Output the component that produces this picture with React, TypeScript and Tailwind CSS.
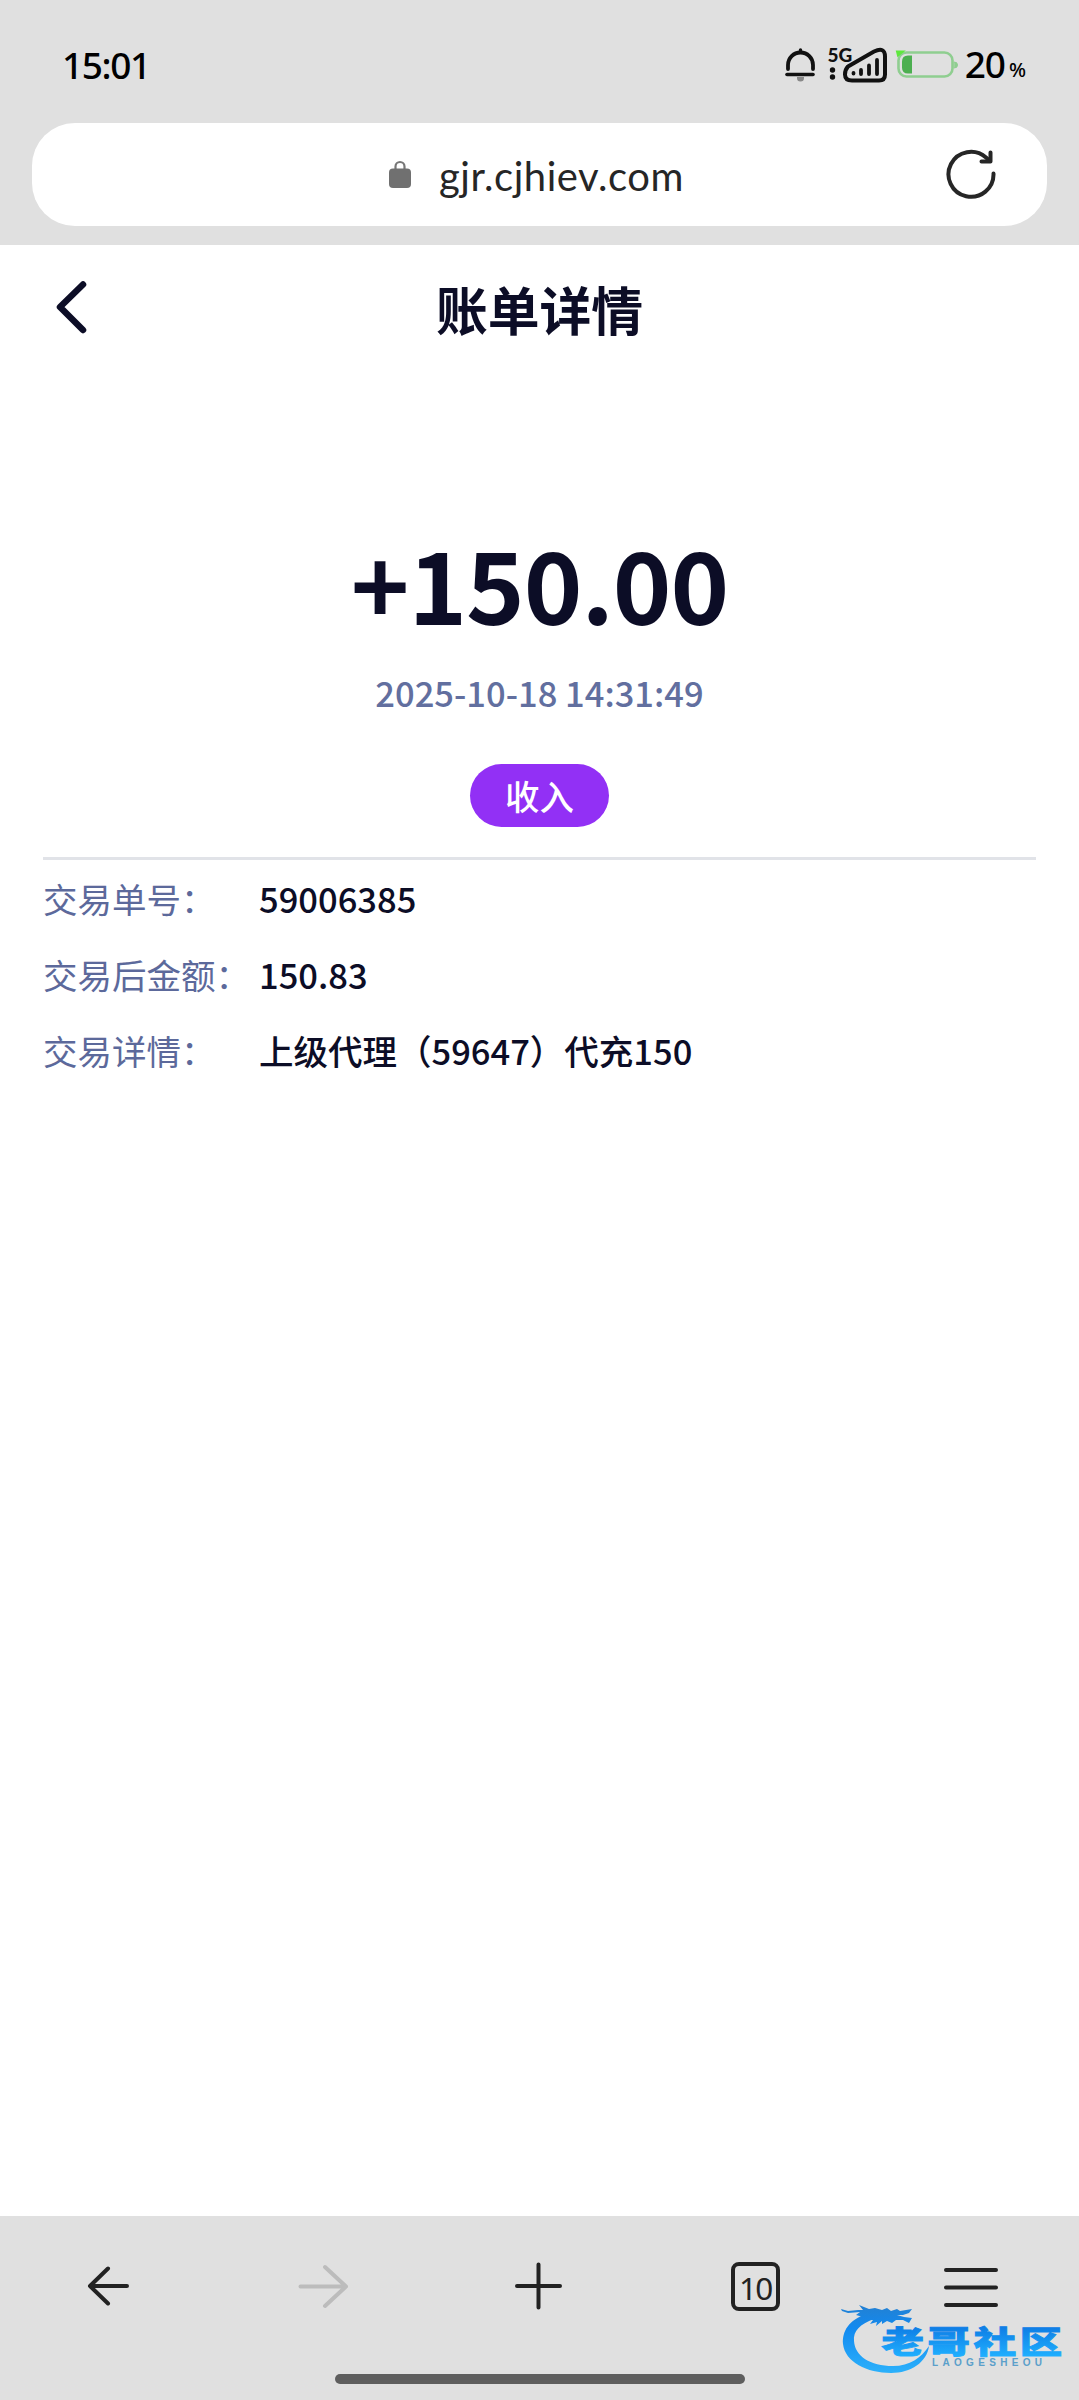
import React from 'react';

interface DetailRow {
  label: string;
  value: string;
}

const rows: DetailRow[] = [
  { label: '交易单号：', value: '59006385' },
  { label: '交易后金额：', value: '150.83' },
  { label: '交易详情：', value: '上级代理（59647）代充150' },
];

function StatusBar() {
  return (
    <div className="flex h-[123px] items-start justify-between pl-[62px] pr-[53px] pt-[41px] text-black">
      <span className="font-['Noto_Sans'] text-[37px] font-medium leading-[48px] tracking-[-1.4px]">15:01</span>
      <div className="flex h-12 items-center">
        <svg width="185" height="48" viewBox="0 0 185 48" fill="none" strokeLinecap="round">
          {/* Bell */}
          <path d="M9 28v-4a12.500 12.500 0 0 1 25 0v4" stroke="#111" strokeWidth="3.8" />
          <path d="M8 33.500h26" stroke="#111" strokeWidth="3.6" />
          <path d="M21.500 9v2" stroke="#111" strokeWidth="3.4" />
          <path d="M18 36h7v1a3.500 3.500 0 0 1-7 0z" fill="#888" />
          {/* Signal */}
          <text x="48.500" y="20.500" fontFamily="Lato" fontWeight="900" fontSize="19" fill="#111">5G</text>
          <circle cx="53.500" cy="29" r="2.700" fill="#111" />
          <circle cx="53.500" cy="36" r="2.700" fill="#111" />
          <path d="M69 25.500L95 10.500q11-5 11 5v18q0 6-6 6H73q-7 0-7-6 0-5 3-8z" stroke="#111" strokeWidth="4" />
          <path d="M74.500 32v.5M82 29v4M90 24.500v8.500M98 19v14" stroke="#111" strokeWidth="3.8" />
          {/* Battery */}
          <rect x="119.500" y="11.500" width="54" height="24" rx="8" stroke="#8fce90" strokeWidth="2.600" />
          <path d="M175.500 21a3 3 0 0 1 0 6z" fill="#8fce90" stroke="#8fce90" />
          <path d="M133 14.500v18h-4q-6 0-6-6v-6q0-6 6-6z" fill="#4caf50" />
          <path d="M118 10.500h6l-5 4z" fill="#5fe83e" stroke="#5fe83e" strokeWidth="2" />
        </svg>
        <span className="mb-[3px] ml-[1px] font-['Noto_Sans'] text-[37px] font-medium leading-none tracking-[-1px]">20</span>
        <span className="ml-[4px] mt-[9px] font-['Noto_Sans'] text-[20px] font-medium leading-none">%</span>
      </div>
    </div>
  );
}

function AddressBar() {
  return (
    <div className="mx-8 flex h-[103px] items-center rounded-[43px] bg-white text-[#262626]">
      <svg className="mb-0.5 ml-[357px]" width="22" height="28" viewBox="0 0 22 28">
        <path d="M6.500 10V6.500a4.500 4.500 0 0 1 9 0V10" fill="none" stroke="#777" strokeWidth="2.200" />
        <rect y="8.500" width="22" height="19.500" rx="4" fill="#707070" />
      </svg>
      <span className="ml-7 whitespace-nowrap pt-[3px] font-[Lato] text-[40px] leading-[48px] tracking-[0.55px]">gjr.cjhiev.com</span>
      <svg className="mb-px ml-auto mr-[50px]" width="52" height="52" viewBox="0 0 52 52" fill="none" stroke="#262626" strokeWidth="4" strokeLinecap="round" strokeLinejoin="round">
        <path d="M48.500 25.500A22.500 22.500 0 1 1 41 9.500L45 13" />
        <path d="M45.500 4.500v9h-9" />
      </svg>
    </div>
  );
}

function BillHeader() {
  return (
    <div className="grid h-[124px] grid-cols-[120px_1fr_120px] items-center text-[#0c0d26]">
      <svg className="ml-[55px]" width="32" height="54" viewBox="0 0 32 54" fill="none" stroke="currentColor" strokeWidth="6.5" strokeLinecap="round" strokeLinejoin="round">
        <path d="M28 4.500L5 27l23 23" />
      </svg>
      <h1 className="pt-1 text-center text-[51.8px] font-bold leading-[60px]">账单详情</h1>
    </div>
  );
}

function BrowserToolbar() {
  return (
    <div className="flex h-[184px] flex-col items-center bg-[#e0e0e0]">
      <div className="grid h-[140px] w-full grid-cols-5 place-items-center text-[#222]">
        <svg width="54" height="54" viewBox="0 0 54 54" fill="none" stroke="currentColor" strokeWidth="4" strokeLinecap="round" strokeLinejoin="round">
          <path d="M46 27H9M27 9.500L9 27l18 17.500" />
        </svg>
        <svg width="54" height="54" viewBox="0 0 54 54" fill="none" stroke="#bcbcbc" strokeWidth="4" strokeLinecap="round" strokeLinejoin="round">
          <path d="M3.500 27.500H49M28 8l21 19.500L28 47" />
        </svg>
        <svg width="54" height="54" viewBox="0 0 54 54" fill="none" stroke="currentColor" strokeWidth="4" strokeLinecap="round">
          <path d="M5 27h43M26.500 5.500v43" />
        </svg>
        <div className="flex h-[49px] w-[49px] items-center justify-center rounded-[8px] border-4 border-current pt-[3px] font-['Noto_Sans'] text-[31.5px] leading-none tracking-[-1.8px]">
          10
        </div>
        <svg width="54" height="54" viewBox="0 0 54 54" fill="none" stroke="currentColor" strokeWidth="4" strokeLinecap="round">
          <path d="M2 11h50M2 28.500h50M2 46h50" />
        </svg>
      </div>
      <div className="mt-[18px] h-[10px] w-[410px] rounded-full bg-[#5e5e5e]" />
    </div>
  );
}

/**
 * Community logo that floats over the bottom right corner
 */
function Watermark() {
  return (
    <svg className="absolute bottom-[15px] right-0" width="249" height="95" viewBox="0 0 249 95">
      <defs>
        <linearGradient id="wm" x1="0" y1="15" x2="0" y2="82" gradientUnits="userSpaceOnUse">
          <stop offset="0" stopColor="#2380d2" />
          <stop offset="0.35" stopColor="#128af0" />
          <stop offset="1" stopColor="#2bb0fb" />
        </linearGradient>
        <linearGradient id="wmText" x1="0" y1="0" x2="0" y2="1">
          <stop offset="0.25" stopColor="#0f7fe6" />
          <stop offset="0.9" stopColor="#1fb0ff" />
        </linearGradient>
      </defs>
      <path
        d="M36 24C19 30 12 41 13 54c2 18 24 29 48 29 20 0 36-11 38-27-8 12-19 20-36 20-23 0-38-10-39-25-1-10 6-17 20-22z"
        fill="url(#wm)"
      />
      <path
        d="M11 19L18 21L28 20L33 20L29 15L39 19L45 18L52 20L57 18L61 21L67 19L70 21L82 19L79 23L73 25L67 25L74 27L82 28L79 33L73 30L66 30L62 33L57 31L52 34L52 31L46 36L47 32L40 34L43 30L36 30L30 32L33 27L26 25L30 22L18 23L12 21Z"
        fill="url(#wm)"
      />
      <text
        transform="translate(51.500 62.500) scale(1.39 1)"
        fontFamily="Noto Sans CJK SC"
        fontWeight="900"
        fontSize="30.500"
        letterSpacing="2.700"
        fill="url(#wmText)"
        stroke="url(#wmText)"
        strokeWidth="0.9"
      >
        老哥社区
      </text>
      <text x="102" y="76" fontFamily="Liberation Sans" fontWeight="bold" fontSize="10" textLength="110" fill="#5b9fca">LAOGESHEOU</text>
    </svg>
  );
}

export default function App() {
  return (
    <div className="relative flex h-[2400px] w-[1079px] flex-col overflow-hidden bg-white font-['Noto_Sans_CJK_SC',sans-serif]">
      <div className="h-[245px] bg-[#e0e0e0]">
        <StatusBar />
        <AddressBar />
      </div>

      <BillHeader />

      <main className="flex flex-1 flex-col px-[43px] font-medium">
        {/* Amount summary */}
        <div className="flex flex-col items-center pt-[153px]">
          <p className="text-[99.5px] font-bold leading-[120px] tracking-[-1px] text-[#0c0d26]">+150.00</p>
          <p className="mt-[25px] text-[34.5px] leading-[50px] text-[#626f9f]">2025-10-18 14:31:49</p>
          <span className="mt-[47px] flex h-[63px] w-[139px] items-center justify-center rounded-full bg-[#9230f5] text-[34.5px] leading-none text-white">
            收入
          </span>
        </div>

        {/* Transaction details */}
        <dl className="mt-[30px] border-t-[3px] border-[#e1e3e8] text-[34.5px]">
          {rows.map((row) => (
            <div key={row.label} className="flex h-[76px] items-center pt-px">
              <dt className="w-[216px] whitespace-nowrap font-normal text-[#5c699b]">{row.label}</dt>
              <dd className="text-[#0c0d26]">{row.value}</dd>
            </div>
          ))}
        </dl>
      </main>

      <BrowserToolbar />
      <Watermark />
    </div>
  );
}
